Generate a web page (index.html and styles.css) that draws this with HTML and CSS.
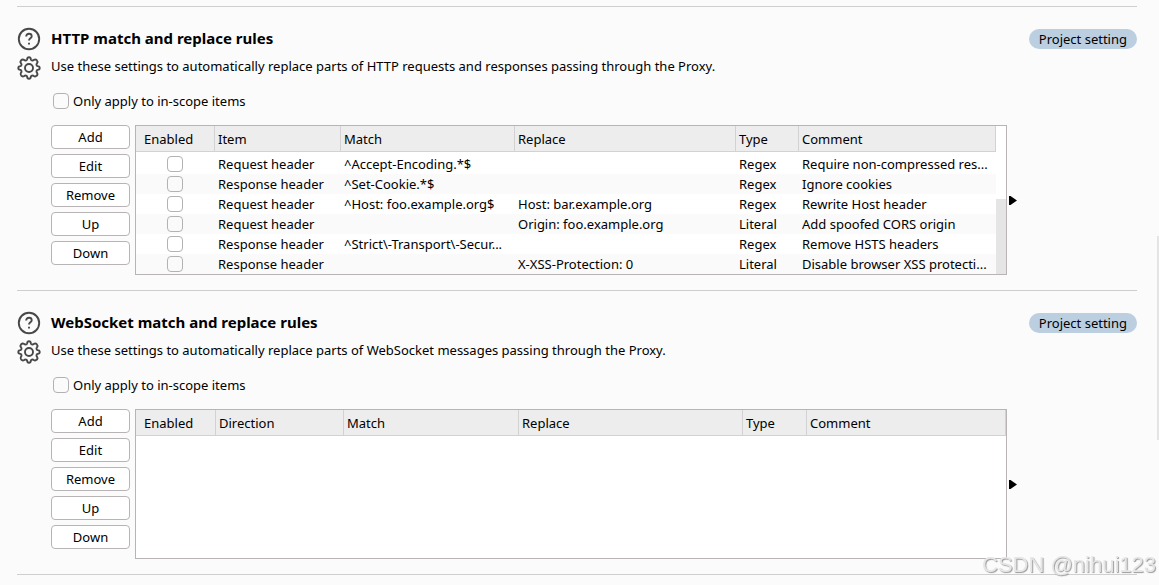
FILE: index.html
```html
<!DOCTYPE html>
<html lang="en">
<head>
<meta charset="utf-8">
<title>Proxy settings</title>
<link rel="stylesheet" href="styles.css">
</head>
<body>
<svg class="sprite" aria-hidden="true">
  <symbol id="help" viewBox="0 0 24 24">
    <circle cx="12" cy="12" r="10.2"/>
    <path d="M9.200 9.400c0-1.600 1.200-2.600 2.800-2.600s2.700 1 2.700 2.400c0 2.100-2.700 2.200-2.700 4.400"/>
    <path d="M12 15.800v1.800"/>
  </symbol>
  <symbol id="gear" viewBox="0 0 24 24">
    <circle cx="12" cy="12" r="4"/>
    <path d="M10.1 3.4Q10.300 1.300 12.000 1.300Q13.700 1.300 13.900 3.400Q14.200 4.500 15.300 4.500Q16.100 4.600 16.700 4.000Q18.400 2.900 19.700 4.200Q21.100 5.600 20.000 7.300Q19.400 7.900 19.500 8.700Q19.500 9.800 20.600 10.100Q22.700 10.300 22.700 12.000Q22.700 13.700 20.600 13.900Q19.500 14.200 19.500 15.300Q19.400 16.100 20.000 16.700Q21.100 18.400 19.700 19.700Q18.400 21.100 16.700 20.000Q16.100 19.400 15.300 19.500Q14.200 19.500 13.900 20.600Q13.700 22.700 12.000 22.700Q10.300 22.700 10.100 20.600Q9.800 19.500 8.700 19.500Q7.900 19.400 7.300 20.000Q5.600 21.100 4.200 19.700Q2.900 18.400 4.000 16.700Q4.600 16.100 4.500 15.300Q4.500 14.200 3.400 13.900Q1.300 13.700 1.300 12.000Q1.300 10.300 3.400 10.100Q4.500 9.800 4.500 8.700Q4.600 7.900 4.000 7.300Q2.900 5.600 4.200 4.200Q5.600 2.900 7.300 4.000Q7.900 4.600 8.700 4.500Q9.800 4.500 10.100 3.400Z"/>
  </symbol>
</svg>
<main class="page">
  <section class="rules">
    <div class="side">
      <button class="icon-button" type="button" aria-label="Help"><svg class="icon"><use href="#help"/></svg></button>
      <button class="icon-button" type="button" aria-label="Options"><svg class="icon"><use href="#gear"/></svg></button>
    </div>
    <div class="body">
      <header class="heading"><h2 class="title">HTTP match and replace rules</h2><span class="badge">Project setting</span></header>
      <p class="description">Use these settings to automatically replace parts of HTTP requests and responses passing through the Proxy.</p>
      <label class="scope"><input class="check" type="checkbox">Only apply to in-scope items</label>
      <div class="editor">
        <div class="actions">
          <button class="action" type="button">Add</button>
          <button class="action" type="button">Edit</button>
          <button class="action" type="button">Remove</button>
          <button class="action" type="button">Up</button>
          <button class="action" type="button">Down</button>
        </div>
        <div class="frame">
          <table class="table">
            <colgroup><col class="http-enabled"><col class="http-item"><col class="http-match"><col class="http-replace"><col class="http-type"><col></colgroup>
            <thead><tr><th>Enabled</th><th>Item</th><th>Match</th><th>Replace</th><th>Type</th><th>Comment</th></tr></thead>
            <tbody>
              <tr class="spacer"><td colspan="6"></td></tr>
              <tr><td><input class="check" type="checkbox" aria-label="Enable rule 1"></td><td>Request header</td><td>^Accept-Encoding.*$</td><td></td><td>Regex</td><td>Require non-compressed res...</td></tr>
              <tr><td><input class="check" type="checkbox" aria-label="Enable rule 2"></td><td>Response header</td><td>^Set-Cookie.*$</td><td></td><td>Regex</td><td>Ignore cookies</td></tr>
              <tr><td><input class="check" type="checkbox" aria-label="Enable rule 3"></td><td>Request header</td><td>^Host: foo.example.org$</td><td>Host: bar.example.org</td><td>Regex</td><td>Rewrite Host header</td></tr>
              <tr><td><input class="check" type="checkbox" aria-label="Enable rule 4"></td><td>Request header</td><td></td><td>Origin: foo.example.org</td><td>Literal</td><td>Add spoofed CORS origin</td></tr>
              <tr><td><input class="check" type="checkbox" aria-label="Enable rule 5"></td><td>Response header</td><td>^Strict\-Transport\-Secur...</td><td></td><td>Regex</td><td>Remove HSTS headers</td></tr>
              <tr><td><input class="check" type="checkbox" aria-label="Enable rule 6"></td><td>Response header</td><td></td><td>X-XSS-Protection: 0</td><td>Literal</td><td>Disable browser XSS protecti...</td></tr>
            </tbody>
          </table>
          <div class="scroll"><div class="thumb"></div></div>
        </div>
        <button class="expand" type="button" aria-label="Expand"><svg class="arrow" viewBox="0 0 8 9"><path d="M0 0h1.500L8 4.500 1.500 9H0z"/></svg></button>
      </div>
    </div>
  </section>
  <section class="rules">
    <div class="side">
      <button class="icon-button" type="button" aria-label="Help"><svg class="icon"><use href="#help"/></svg></button>
      <button class="icon-button" type="button" aria-label="Options"><svg class="icon"><use href="#gear"/></svg></button>
    </div>
    <div class="body">
      <header class="heading"><h2 class="title">WebSocket match and replace rules</h2><span class="badge">Project setting</span></header>
      <p class="description">Use these settings to automatically replace parts of WebSocket messages passing through the Proxy.</p>
      <label class="scope"><input class="check" type="checkbox">Only apply to in-scope items</label>
      <div class="editor">
        <div class="actions">
          <button class="action" type="button">Add</button>
          <button class="action" type="button">Edit</button>
          <button class="action" type="button">Remove</button>
          <button class="action" type="button">Up</button>
          <button class="action" type="button">Down</button>
        </div>
        <div class="frame">
          <table class="table">
            <colgroup><col class="ws-enabled"><col class="ws-direction"><col class="ws-match"><col class="ws-replace"><col class="ws-type"><col></colgroup>
            <thead><tr><th>Enabled</th><th>Direction</th><th>Match</th><th>Replace</th><th>Type</th><th>Comment</th></tr></thead>
          </table>
        </div>
        <button class="expand" type="button" aria-label="Expand"><svg class="arrow" viewBox="0 0 8 9"><path d="M0 0h1.500L8 4.500 1.500 9H0z"/></svg></button>
      </div>
    </div>
  </section>
  <hr class="end">
</main>
<div class="page-thumb"></div>
<div class="watermark">CSDN @nihui123</div>
</body>
</html>
```
FILE: styles.css
```css
* { box-sizing: border-box; }
body {
  margin: 0;
  background: #fbfbfb;
  color: #000;
  font: 13px/20px "Noto Sans", "Open Sans", sans-serif;
}
button, input { font: inherit; color: inherit; margin: 0; }
.sprite { position: absolute; width: 0; height: 0; }
.page { padding: 6px 22px 0 17px; }
.rules {
  display: flex;
  border-top: 1px solid #cfcfcf;
  padding: 20px 0 15px;
}
.side { display: flex; flex-direction: column; flex: 0 0 34px; gap: 5px; }
.icon-button { width: 24px; height: 24px; padding: 0; border: 0; background: none; }
.icon {
  display: block;
  width: 24px;
  height: 24px;
  fill: none;
  stroke: #484848;
  stroke-width: 1.9;
}
.body { flex: 1; min-width: 0; }
.heading { display: flex; align-items: center; justify-content: space-between; height: 24px; }
.title { margin: 0; font-size: 15px; line-height: 22px; padding-bottom: 2px; }
.badge { height: 20px; padding: 0 10px; border-radius: 10px; background: #bccfe1; }
.description { margin: 5px 0 16px; }
.scope { display: flex; align-items: center; width: max-content; gap: 4px; height: 18px; padding-left: 2px; }
.check {
  appearance: none;
  display: block;
  width: 16px;
  height: 16px;
  border: 1px solid #b5b1b3;
  border-radius: 4px;
  background: transparent;
}
.check:checked { background: #6b93b8; }
.editor { display: flex; margin-top: 15px; }
.actions { display: flex; flex-direction: column; gap: 5px; flex: 0 0 79px; margin-right: 5px; }
.action {
  height: 24px;
  padding: 0;
  border: 1px solid #b8b3b5;
  border-radius: 4px;
  background: #fff;
  line-height: 22px;
}
.frame {
  display: flex;
  align-items: flex-start;
  flex: 0 1 872px;
  min-width: 0;
  min-height: 150px;
  border: 1px solid #b8b3b5;
  background: #fff;
}
.table { flex: 1; width: 100%; min-width: 0; table-layout: fixed; border-collapse: separate; border-spacing: 0; }
.http-enabled { width: 79px; }
.http-item { width: 126px; }
.http-match { width: 174px; }
.http-replace { width: 221px; }
.http-type { width: 63px; }
.ws-enabled { width: 80px; }
.ws-direction { width: 128px; }
.ws-match { width: 175px; }
.ws-replace { width: 224px; }
.ws-type { width: 64px; }
.table th {
  height: 26px;
  padding: 0 3px;
  border-right: 1px solid #d2d2d2;
  border-bottom: 1px solid #d2d2d2;
  background: #ededed;
  font-weight: normal;
  text-align: left;
  white-space: nowrap;
}
.table th:first-child { padding-left: 8px; }
.table td { height: 20px; padding: 0 4px 0 3px; white-space: nowrap; overflow: hidden; }
.table .spacer td { height: 2px; }
.table tr:nth-child(odd):not(.spacer) td { background: #fafafa; }
.table td .check { margin: 0 auto; }
.scroll { display: flex; align-items: flex-end; align-self: stretch; flex: 0 0 10px; }
.thumb { width: 100%; height: 51%; background: #e5e5e5; }
.expand { align-self: center; padding: 0; margin-left: 2px; border: 0; background: none; }
.arrow { display: block; width: 8px; height: 9px; }
.end { margin: 0; border: 0; border-top: 1px solid #cfcfcf; }
.page-thumb { position: fixed; right: 0; top: 236px; width: 2px; height: 204px; background: #e5e5e5; }
.watermark {
  position: fixed;
  right: 3px;
  bottom: 8px;
  color: #e6e6e6;
  font: 22px/24px "Liberation Sans", sans-serif;
  text-shadow: 1px 1px 1px #999;
}
```
